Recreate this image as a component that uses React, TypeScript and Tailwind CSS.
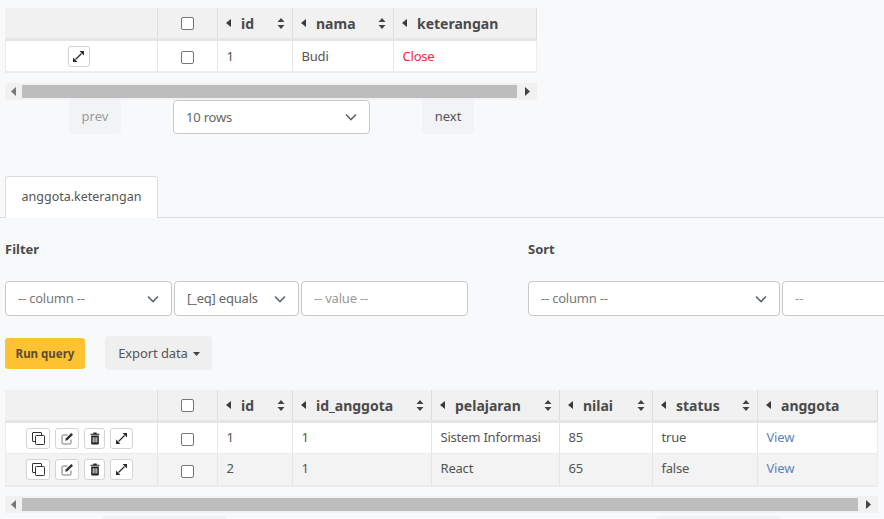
import React from "react";

function Expand() {
  return (
    <svg width="11" height="11" viewBox="0 0 11 11" fill="#2a2a2a">
      <path d="M6.500 0H11v4.500z" />
      <path d="M0 11V6.500L4.500 11z" />
      <path d="M2.500 8.500l6-6" stroke="#2a2a2a" strokeWidth="1.300" fill="none" />
    </svg>
  );
}
function Copy() {
  return (
    <svg width="13" height="13" viewBox="0 0 13 13" fill="none" stroke="#333" strokeWidth="1">
      <path d="M3.500 9.500h-2.500a.5.5 0 0 1-.5-.5V1a.5.5 0 0 1 .5-.5h8a.5.5 0 0 1 .5.5v2.500" />
      <rect x="3.500" y="3.500" width="9" height="9" rx="0.800" />
    </svg>
  );
}
function Edit() {
  return (
    <svg width="13" height="13" viewBox="0 0 13 13" fill="none">
      <path d="M10 7.500V11a1 1 0 0 1-1 1H2a1 1 0 0 1-1-1V4a1 1 0 0 1 1-1h4.500" stroke="#777" strokeWidth="1" />
      <path d="M10.300 1l1.700 1.700-5.600 5.600-2.200.5.5-2.200z" fill="#333" />
    </svg>
  );
}
function Trash() {
  return (
    <svg width="10" height="13" viewBox="0 0 11 13" fill="#222">
      <path d="M4 0h3l.6 1.200H10.500v1.300H.5V1.200H3.400z" />
      <path fillRule="evenodd" d="M1.300 3.300h8.400V12a1 1 0 0 1-1 1H2.300a1 1 0 0 1-1-1zM3 5v6h1V5zm2 0v6h1V5zm2 0v6h1V5z" />
    </svg>
  );
}
function Sort() {
  return (
    <svg width="8" height="11" viewBox="0 0 8 11" fill="#444">
      <path d="M4 0l3.500 4h-7zM4 11L.5 7h7z" />
    </svg>
  );
}
function Chevron() {
  return (
    <svg width="12" height="8" viewBox="0 0 12 8" fill="none" stroke="#5f6672" strokeWidth="1.600">
      <path d="M1 1.500l5 5 5-5" />
    </svg>
  );
}
function Tri({ right = false }: { right?: boolean }) {
  return (
    <svg width="5" height="9" viewBox="0 0 5 9" fill={right ? "#444" : "#777"}>
      <path d={right ? "M0 0l5 4.500-5 4.500z" : "M5 0L0 4.500l5 4.500z"} />
    </svg>
  );
}

function Check() {
  return <span className="block h-[13px] w-[13px] rounded-[2px] border border-[#767676] bg-white" />;
}

function HeadCell({ w, label, sort = true }: { w: number; label: string; sort?: boolean }) {
  return (
    <div
      className="flex h-full shrink-0 items-center border-r border-[#dedede] pl-[8px] pr-[7px]"
      style={{ width: w }}
    >
      <svg className="mr-[10px] shrink-0" width="5" height="8" viewBox="0 0 5 8" fill="#3a3a3a">
        <path d="M5 0L0 4l5 4z" />
      </svg>
      <span className="flex-1 pt-px text-[14px] font-bold text-[#4a4a4a]">{label}</span>
      {sort && <Sort />}
    </div>
  );
}

function BodyCell({ w, children, tone = "text-[#555]", shift = "", edge = "border-r border-[#e6e6e6]" }: { w: number; children?: React.ReactNode; tone?: string; shift?: string; edge?: string }) {
  return (
    <div
      className={`flex h-full shrink-0 items-center pl-[8.500px] text-[13px] tracking-[-0.2px] ${edge} ${tone} ${shift}`}
      style={{ width: w }}
    >
      {children}
    </div>
  );
}

function IconBtn({ w, children }: { w: number; children: React.ReactNode }) {
  return (
    <span
      className="flex h-[21px] items-center justify-center rounded-[3px] border border-[#d4d4d4] bg-white"
      style={{ width: w }}
    >
      {children}
    </span>
  );
}

function Scroll({ w }: { w: number }) {
  return (
    <div className="flex h-[17px] items-center bg-[#f1f1f1]" style={{ width: w }}>
      <span className="flex w-[17px] shrink-0 justify-center">
        <Tri />
      </span>
      <span className="h-[13px] flex-1 bg-[#bdbdbd]" />
      <span className="flex w-[20px] shrink-0 justify-center">
        <Tri right />
      </span>
    </div>
  );
}

function Select({ w, label, h = "h-[35px]", tone = "text-[#777]", shift = "" }: { w: number; label: string; h?: string; tone?: string; shift?: string }) {
  return (
    <div
      className={`flex shrink-0 items-center justify-between rounded-[4px] border border-[#c9c9c9] bg-white pl-[12px] pr-[12px] text-[13px] tracking-[-0.2px] ${h} ${tone}`}
      style={{ width: w }}
    >
      <span className={shift}>{label}</span>
      <Chevron />
    </div>
  );
}

const topCols = [153, 60, 75, 101, 143];
const botCols = [153, 60, 75, 139, 128, 93, 105, 120];

export default function App() {
  return (
    <div
      className="h-[519px] w-[884px] overflow-hidden bg-[#f8f9fb] pl-[5px] pt-[8px]"
      style={{ fontFamily: '"Noto Sans", "Open Sans", sans-serif' }}
    >
      {/* first table */}
      <div className="w-[532px]">
        <div className="flex h-[33px] items-stretch border-b-[3px] border-[#e5e5e5] bg-[#f1f1f1]">
          <div className="h-full shrink-0 border-r border-[#dedede]" style={{ width: topCols[0] }} />
          <div className="flex h-full shrink-0 items-center justify-center border-r border-[#dedede]" style={{ width: topCols[1] }}>
            <Check />
          </div>
          <HeadCell w={topCols[2]} label="id" />
          <HeadCell w={topCols[3]} label="nama" />
          <HeadCell w={topCols[4]} label="keterangan" sort={false} />
        </div>
        <div className="flex h-[32px] items-stretch border-x border-b-2 border-[#ececec] bg-white">
          <div className="flex h-full shrink-0 items-center justify-center border-r border-[#e6e6e6] pr-[6px]" style={{ width: topCols[0] - 1 }}>
            <IconBtn w={22}>
              <Expand />
            </IconBtn>
          </div>
          <div className="flex h-full shrink-0 items-center justify-center border-r border-[#e6e6e6] pt-[3px]" style={{ width: topCols[1] }}>
            <Check />
          </div>
          <BodyCell w={topCols[2]} shift="pt-px">1</BodyCell>
          <BodyCell w={topCols[3]} shift="pt-px">Budi</BodyCell>
          <BodyCell w={topCols[4] - 1} tone="text-[#f5283f]" shift="pt-px" edge="">Close</BodyCell>
        </div>
      </div>
      <div className="mt-[10px]">
        <Scroll w={532} />
      </div>
      <div className="flex h-[34px] w-[532px] items-center">
        <span className="ml-[64px] flex h-[34px] w-[52px] items-center justify-center rounded-[4px] bg-[#f1f3f6] text-[13px] text-[#9a9a9a]">prev</span>
        <div className="ml-[52px]">
          <Select w={197} label="10 rows" h="h-[34px]" tone="text-[#666]" shift="pt-px" />
        </div>
        <span className="ml-[52px] flex h-[34px] w-[52px] items-center justify-center rounded-[4px] bg-[#f1f3f6] text-[13px] text-[#555]">next</span>
      </div>

      {/* tabs */}
      <div className="-ml-[5px] mt-[42px] flex h-[42px] items-end border-b border-[#dcdcdc] pl-[5px]">
        <div className="-mb-px flex h-[42px] w-[153px] items-center justify-center rounded-t-[4px] border border-b-0 border-[#dcdcdc] bg-white text-[12.500px] text-[#555]">
          anggota.keterangan
        </div>
      </div>

      {/* filter and sort labels */}
      <div className="mt-[22px] flex h-[19px] items-center text-[13px] font-bold text-[#4a4a4a]">
        <span className="w-[523px]">Filter</span>
        <span>Sort</span>
      </div>

      <div className="mt-[22px] flex h-[35px] w-[900px]">
        <Select w={167} label="-- column --" />
        <div className="ml-[2px]">
          <Select w={125} label="[_eq] equals" tone="text-[#666]" />
        </div>
        <div className="ml-[2px] flex h-[35px] w-[167px] shrink-0 items-center rounded-[4px] border border-[#c9c9c9] bg-white pl-[12px] text-[13px] tracking-[-0.2px] text-[#999]">
          -- value --
        </div>
        <div className="ml-[60px]">
          <Select w={252} label="-- column --" />
        </div>
        <div className="ml-[2px] flex h-[35px] w-[150px] shrink-0 items-center rounded-[4px] border border-[#c9c9c9] bg-white pl-[12px] text-[13px] text-[#999]">
          --
        </div>
      </div>

      {/* actions */}
      <div className="mt-[20px] flex h-[34px] items-center">
        <span className="flex h-[31px] w-[80px] items-center justify-center rounded-[3px] bg-[#ffc233] pt-px text-[11.500px] font-bold text-[#5a4c30]">Run query</span>
        <span className="ml-[20px] flex h-[34px] w-[107px] items-center justify-center gap-[5px] rounded-[4px] bg-[#efefef] pl-[1px] pt-px text-[13px] tracking-[-0.1px] text-[#555]">
          Export data
          <svg width="7" height="4" viewBox="0 0 7 4" fill="#444">
            <path d="M0 0h7L3.500 4z" />
          </svg>
        </span>
      </div>

      {/* second table */}
      <div className="mt-[20px] w-[873px]">
        <div className="flex h-[33px] items-stretch border-b-[3px] border-[#e5e5e5] bg-[#f1f1f1]">
          <div className="h-full shrink-0 border-r border-[#dedede]" style={{ width: botCols[0] }} />
          <div className="flex h-full shrink-0 items-center justify-center border-r border-[#dedede]" style={{ width: botCols[1] }}>
            <Check />
          </div>
          <HeadCell w={botCols[2]} label="id" />
          <HeadCell w={botCols[3]} label="id_anggota" />
          <HeadCell w={botCols[4]} label="pelajaran" />
          <HeadCell w={botCols[5]} label="nilai" />
          <HeadCell w={botCols[6]} label="status" />
          <HeadCell w={botCols[7]} label="anggota" sort={false} />
        </div>
        {[
          ["1", "1", "Sistem Informasi", "85", "true"],
          ["2", "1", "React", "65", "false"],
        ].map((r, i) => (
          <div
            key={i}
            className={`flex items-stretch border-x border-[#ececec] ${i === 0 ? "h-[31px] border-b bg-white" : "h-[33px] border-b-2 bg-[#f3f3f3]"}`}
          >
            <div className="flex h-full shrink-0 items-center justify-center gap-[5px] border-r border-[#e6e6e6] pr-[4px]" style={{ width: botCols[0] - 1 }}>
              <IconBtn w={24}>
                <Copy />
              </IconBtn>
              <IconBtn w={24}>
                <Edit />
              </IconBtn>
              <IconBtn w={21}>
                <Trash />
              </IconBtn>
              <IconBtn w={23}>
                <Expand />
              </IconBtn>
            </div>
            <div className="flex h-full shrink-0 items-center justify-center border-r border-[#e6e6e6] pt-[3px]" style={{ width: botCols[1] }}>
              <Check />
            </div>
            <BodyCell w={botCols[2]} shift="pb-px">{r[0]}</BodyCell>
            <BodyCell w={botCols[3]} shift="pb-px">{r[1]}</BodyCell>
            <BodyCell w={botCols[4]} shift="pb-px">{r[2]}</BodyCell>
            <BodyCell w={botCols[5]} shift="pb-px">{r[3]}</BodyCell>
            <BodyCell w={botCols[6]} shift="pb-px">{r[4]}</BodyCell>
            <BodyCell w={botCols[7] - 1} tone="text-[#5b84b8]" shift="pb-px" edge="">View</BodyCell>
          </div>
        ))}
      </div>
      <div className="mt-[9px]">
        <Scroll w={873} />
      </div>
      <div className="relative mt-[3px] h-[10px]">
        <span className="absolute left-[97px] top-0 h-[10px] w-[125px] rounded-[4px] bg-[#eff1f4]" />
        <span className="absolute left-[651px] top-0 h-[10px] w-[125px] rounded-[4px] bg-[#eff1f4]" />
      </div>
    </div>
  );
}
